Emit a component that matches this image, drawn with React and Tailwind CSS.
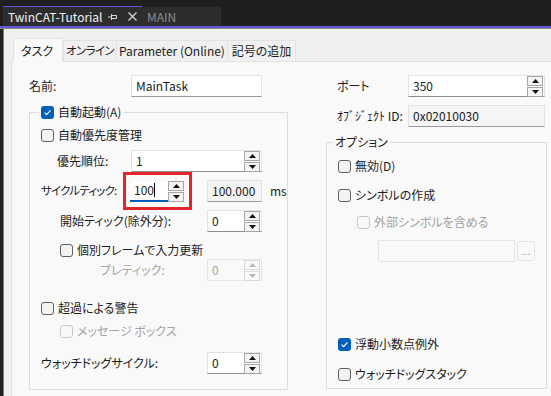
import React from 'react';

function Check({ checked, disabled }) {
  if (checked) {
    return (
      <span className="w-[13px] h-[13px] rounded-[3px] bg-[#005fb8] flex items-center justify-center shrink-0">
        <svg width="9" height="9" viewBox="0 0 9 9">
          <path d="M1.6 4.7 L3.6 6.7 L7.5 2.3" fill="none" stroke="#ffffff" strokeWidth="1.2" />
        </svg>
      </span>
    );
  }
  return (
    <span
      className={`w-[13px] h-[13px] rounded-[3px] border shrink-0 ${
        disabled ? 'border-[#c8c8c8] bg-[#f9f9f9]' : 'border-[#5f5f5f] bg-[#f3f3f3]'
      }`}
    />
  );
}

function CheckRow({ label, checked, disabled, className = '' }) {
  return (
    <div className={`flex items-center gap-[4px] h-[18px] ${className}`}>
      <Check checked={checked} disabled={disabled} />
      <span className={disabled ? 'text-[#a3a3a3]' : ''}>{label}</span>
    </div>
  );
}

function Spinner({ disabled }) {
  const box = disabled ? 'border-[#dadada] bg-[#f9f9f9]' : 'border-[#a6a6a6] bg-[#f3f3f3]';
  const fill = disabled ? '#b8b8b8' : '#111111';
  return (
    <div className="flex flex-col gap-[1px] w-[16px] shrink-0 mr-[1px]">
      <span className={`h-[10px] border ${box} flex items-center justify-center`}>
        <svg width="7" height="4" viewBox="0 0 7 4">
          <path d="M0 4 L3.5 0 L7 4 Z" fill={fill} />
        </svg>
      </span>
      <span className={`h-[10px] border ${box} flex items-center justify-center`}>
        <svg width="7" height="4" viewBox="0 0 7 4">
          <path d="M0 0 L3.5 4 L7 0 Z" fill={fill} />
        </svg>
      </span>
    </div>
  );
}

function SpinBox({ value, width, disabled }) {
  return (
    <div
      className={`${width} h-[22px] flex items-center border shrink-0 ${
        disabled
          ? 'bg-[#f9f9f9] border-[#e5e5e5] text-[#a3a3a3]'
          : 'bg-white border-[#e3e3e3] border-b-[#8d8d8d]'
      }`}
    >
      <span className="flex-1 pl-[4px]">{value}</span>
      <Spinner disabled={disabled} />
    </div>
  );
}

function TextBox({ value, width, readOnly }) {
  return (
    <div
      className={`${width} h-[22px] flex items-center shrink-0 pl-[4px] border border-[#e3e3e3] border-b-[#9a9a9a] ${
        readOnly ? 'bg-[#f5f5f5]' : 'bg-white'
      }`}
    >
      {value}
    </div>
  );
}

export default function App() {
  return (
    <div className="w-[551px] h-[396px] overflow-hidden whitespace-nowrap bg-[#1f1f1f] text-[12px] leading-none text-[#1b1b1b] font-['Noto_Sans_CJK_JP','Noto_Sans',sans-serif] [font-feature-settings:'palt']">
      {/* document tabs */}
      <div className="h-[26px] flex items-end pl-[3px]">
        <div className="w-[139px] h-[20px] bg-[#2d2d2d] border-t border-[#6157d6] flex items-center pl-[5px] text-[#f2f2f2]">
          <span className="flex-1">TwinCAT-Tutorial</span>
          <svg width="9" height="8" viewBox="0 0 9 8">
            <path d="M0 4H3M3.5 1V7M3.5 2.5H8.5V5.5H3.5" fill="none" stroke="#d8d8d8" strokeWidth="1" />
          </svg>
          <svg width="9" height="9" viewBox="0 0 9 9" className="ml-[11px] mr-[5px]">
            <path d="M0.5 0.5 L8.5 8.5 M8.5 0.5 L0.5 8.5" fill="none" stroke="#d8d8d8" strokeWidth="1.2" />
          </svg>
        </div>
        <div className="w-[79px] h-[19px] bg-[#2d2d2d] flex items-center pl-[5px] text-[#8b8b8b]">MAIN</div>
      </div>
      <div className="h-[2px] bg-[#6157d6]" />
      <div className="h-[1px] bg-[#8a8a8a]" />

      <div className="flex h-[367px]">
        <div className="w-[3px] shrink-0" />
        <div className="flex-1 flex flex-col bg-[#f0f0f0] border-l border-[#7c7c7c]">
          {/* property tabs */}
          <div className="flex items-end pl-[9px] pt-[9px]">
            <div className="relative z-10 -mb-px w-[50px] h-[24px] bg-[#f9f9f9] border border-b-0 border-[#e2e2e2] flex items-center pl-[7px]">
              タスク
            </div>
            <div className="w-[54px] h-[21px] border border-b-0 border-[#e2e2e2] flex items-center justify-center text-[11.5px] tracking-[-0.6px]">オンライン</div>
            <div className="w-[111px] h-[21px] border border-b-0 border-l-0 border-[#e2e2e2] flex items-center justify-center">Parameter (Online)</div>
            <div className="w-[68px] h-[21px] border border-b-0 border-l-0 border-[#e2e2e2] flex items-center justify-center">記号の追加</div>
          </div>

          <div className="flex-1 ml-[7px] bg-[#f9f9f9] border-t border-l border-[#e2e2e2] flex pt-[13px] pl-[17px]">
            {/* left column */}
            <div className="w-[251px] flex flex-col">
              <div className="flex items-center h-[22px]">
                <span className="w-[102px]">名前:</span>
                <TextBox value="MainTask" width="w-[131px]" />
              </div>
              <fieldset className="mt-[6px] border border-[#dcdcdc] pb-[15px]">
                <legend className="ml-[9px] px-[2px]">
                  <CheckRow checked label="自動起動(A)" />
                </legend>
                <div className="pl-[11px] flex flex-col">
                  <CheckRow className="mt-[4px] h-[20px]" label="自動優先度管理" />
                  <div className="mt-[5px] flex items-center h-[22px]">
                    <span className="ml-[16px] w-[74px]">優先順位:</span>
                    <SpinBox value="1" width="w-[131px]" />
                  </div>
                  <div className="flex items-center h-[38px]">
                    <span className="w-[82px] text-[11.5px] tracking-[-0.8px]">サイクルティック:</span>
                    <div className="w-[69px] h-[38px] shrink-0 border-[3px] border-[#e3242b] flex items-center pl-[4px]">
                      <div className="w-[38px] h-[21px] bg-white border-b-2 border-[#005fb8] flex items-center pl-[4px]">
                        100<span className="w-px h-[14px] bg-black" />
                      </div>
                      <Spinner />
                    </div>
                    <div className="ml-[15px]">
                      <TextBox value="100.000" width="w-[55px]" readOnly />
                    </div>
                    <span className="ml-[8px]">ms</span>
                  </div>
                  <div className="flex items-center h-[22px]">
                    <span className="ml-[19px] w-[147px]">開始ティック(除外分):</span>
                    <SpinBox value="0" width="w-[55px]" />
                  </div>
                  <CheckRow className="mt-[9px] ml-[19px]" label="個別フレームで入力更新" />
                  <div className="flex items-center h-[22px]">
                    <span className="ml-[59px] w-[107px] text-[#a3a3a3]">プレティック:</span>
                    <SpinBox value="0" width="w-[55px]" disabled />
                  </div>
                  <CheckRow className="mt-[18px]" label="超過による警告" />
                  <CheckRow className="mt-[5px] ml-[19px]" label="メッセージ ボックス" disabled />
                  <div className="mt-[12px] flex items-center h-[22px]">
                    <span className="w-[166px]">ウォッチドッグサイクル:</span>
                    <SpinBox value="0" width="w-[55px]" />
                  </div>
                </div>
              </fieldset>
            </div>

            {/* right column */}
            <div className="ml-[46px] w-[221px] flex flex-col">
              <div className="flex items-center h-[22px] pl-[11px]">
                <span className="w-[71px]">ポート</span>
                <SpinBox value="350" width="w-[137px]" />
              </div>
              <div className="flex items-center h-[22px] mt-[8px] pl-[11px]">
                <span className="w-[71px]">ｵﾌﾞｼﾞｪｸﾄ ID:</span>
                <TextBox value="0x02010030" width="w-[137px]" readOnly />
              </div>
              <fieldset className="mt-[7px] border border-[#dcdcdc] pb-[5px]">
                <legend className="ml-[6px] px-[2px] h-[16px] flex items-center">オプション</legend>
                <div className="pl-[11px] flex flex-col">
                  <CheckRow className="mt-[7px]" label="無効(D)" />
                  <CheckRow className="mt-[11px]" label="シンボルの作成" />
                  <CheckRow className="mt-[9px] ml-[19px]" label="外部シンボルを含める" disabled />
                  <div className="mt-[9px] ml-[40px] flex items-center h-[22px]">
                    <div className="w-[137px] h-[22px] bg-[#f9f9f9] border border-[#e5e5e5]" />
                    <div className="ml-[2px] w-[18px] h-[20px] rounded-[3px] bg-[#f9f9f9] border border-[#e5e5e5] flex items-center justify-center text-[#9a9a9a] text-[10px]">
                      ...
                    </div>
                  </div>
                  <CheckRow className="mt-[73px]" checked label="浮動小数点例外" />
                  <CheckRow className="mt-[12px]" label="ウォッチドッグスタック" />
                </div>
              </fieldset>
            </div>
          </div>
        </div>
      </div>
    </div>
  );
}
